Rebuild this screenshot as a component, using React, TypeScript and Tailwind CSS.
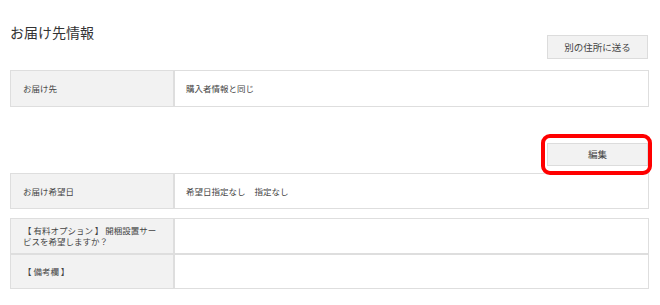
import React from "react";

const font = { fontFamily: '"Noto Sans CJK JP", "Noto Sans", sans-serif' };

function InfoTable({ rows }: { rows: { label: React.ReactNode; value?: React.ReactNode; h: string }[] }) {
  return (
    <table className="w-full border-separate border-spacing-0 table-fixed">
      <tbody>
        {rows.map((r, i) => (
          <tr key={i} className={r.h}>
            <td className="w-[164px] box-border border border-[#dedede] bg-[#f2f2f2] pl-[12px] pr-[10px] text-[8.5px] leading-[11px] text-[#444] align-middle">
              {r.label}
            </td>
            <td className="box-border border border-[#dedede] bg-white pl-[11px] text-[8.5px] leading-[11px] text-[#444] align-middle">
              {r.value}
            </td>
          </tr>
        ))}
      </tbody>
    </table>
  );
}

export default function App() {
  return (
    <div className="w-[660px] h-[305px] bg-white overflow-hidden" style={font}>
      <div className="w-[639px] ml-[10px]">
        {/* Header */}
        <div className="flex justify-between items-start">
          <h2 className="mt-[22px] text-[14px] leading-[20px] text-[#333] font-normal">お届け先情報</h2>
          <button className="mt-[35px] mr-[1px] w-[101px] h-[24px] bg-[#f2f2f2] border border-[#dcdcdc] text-[9.5px] text-[#444]">
            別の住所に送る
          </button>
        </div>

        <div className="mt-[11px] flex flex-col">
          <InfoTable rows={[{ label: "お届け先", value: "購入者情報と同じ", h: "h-[37px]" }]} />
        </div>

        {/* Edit */}
        <div className="mt-[36px] flex justify-end">
          <div className="relative mr-[1px] flex">
            <button className="w-[101px] h-[23px] bg-[#f2f2f2] border border-[#dcdcdc] text-[9.5px] text-[#444]">
              編集
            </button>
            <div className="absolute -left-[6px] -right-[4px] -top-[9px] -bottom-[9px] border-[4px] border-[#f00] rounded-[9px] pointer-events-none" />
          </div>
        </div>

        <div className="mt-[7px] flex flex-col">
          <InfoTable
            rows={[
              {
                label: "お届け希望日",
                value: (
                  <span>
                    希望日指定なし<span className="inline-block w-[9px]" />指定なし
                  </span>
                ),
                h: "h-[36px]",
              },
            ]}
          />
        </div>

        <div className="mt-[9px] flex flex-col">
          <InfoTable
            rows={[
              { label: "【 有料オプション 】 開梱設置サービスを希望しますか？", h: "h-[36px]" },
              { label: "【 備考欄 】", h: "h-[35px]" },
            ]}
          />
        </div>
      </div>
    </div>
  );
}
